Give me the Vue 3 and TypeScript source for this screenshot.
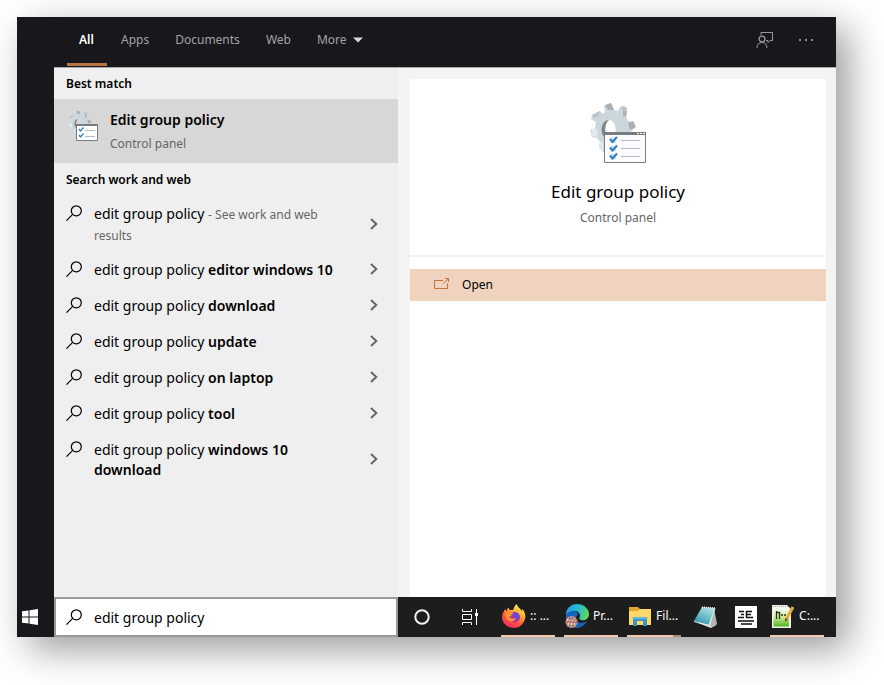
<script setup lang="ts">
import { ref } from 'vue'

interface Suggestion {
  typed: string
  completion?: string
  note?: string
}

const tabs: string[] = ['All', 'Apps', 'Documents', 'Web']
const activeTab = ref<string>('All')
const query = ref<string>('edit group policy')

const suggestions: Suggestion[] = [
  { typed: 'edit group policy', note: '- See work and web results' },
  { typed: 'edit group policy', completion: 'editor windows 10' },
  { typed: 'edit group policy', completion: 'download' },
  { typed: 'edit group policy', completion: 'update' },
  { typed: 'edit group policy', completion: 'on laptop' },
  { typed: 'edit group policy', completion: 'tool' },
  { typed: 'edit group policy', completion: 'windows 10 download' },
]
</script>

<template>
  <div class="page">
    <svg class="defs" width="0" height="0" aria-hidden="true">
      <symbol id="gear" viewBox="0 0 58 62" overflow="visible">
        <path fill="#ccd6dd" fill-rule="evenodd" d="M3 13 11 9 14 12 16 10 15 4 22 1 25 8 29 9 31 5 38 9 37 15 39 19 46 21 46 26 42 29 41 33V50H14L10 44 11 40 8 36 3 35 1 28 6 26 7 20 2 17ZM20 18C10 18 10 37 20 37 29 37 29 18 20 18Z" />
        <path fill="#7f868c" d="M20 18C10 18 10 37 20 37 15 33 15 22 20 18Z" />
        <path fill="#aab0b5" d="M16 3 22 1 25 8 19 8ZM39 21 44 19 47 25 41 28ZM34 8 38 9 37 15 34 14Z" />
        <path fill="#bcc3c8" d="M3 13 11 9 10 13 5 16ZM31 5 35 4 39 7 35 9Z" />
        <path fill="#e2eaef" d="M2 28 7 26 9 30 8 35 3 34ZM10 41 14 39 14 49Z" />
      </symbol>
      <symbol id="gear-list" viewBox="0 0 58 62">
        <use href="#gear" width="58" height="62" />
        <path fill="#fbfcfd" stroke="#777c82" d="M15.500 31.500H56.500V60.500H15.500Z" />
        <path fill="#777c82" d="M15 30H57V33H15Z" />
        <path stroke="#fff" d="M48 31.500H50M51 31.500H53M54 31.500H56" />
        <path fill="#cfe3f3" d="M21 35.500H27V41H21ZM21 44H27V49.500H21ZM21 52H27V57.500H21Z" />
        <path fill="none" stroke="#327fba" stroke-width="2" d="M21 37 23.500 40 28 35M21 45.500 23.500 48.500 28 43.500M21 53.500 23.500 56.500 28 51.500" />
        <path stroke="#b7bcc0" d="M32 38.500H51M32 46.500H51M32 54.500H51" />
      </symbol>
      <symbol id="gear-list-small" viewBox="0 0 32 32">
        <use href="#gear" x="2" width="29" height="31" />
        <path fill="#fff" stroke="#777c82" d="M10.500 15.500H31.500V30.500H10.500Z" />
        <path stroke="#777c82" stroke-width="2" d="M10 15H32" />
        <path fill="none" stroke="#3c82b9" stroke-width="1.400" d="M13 19 14.500 21 17.500 17.500M13 25 14.500 27 17.500 23.500" />
        <path stroke="#b7bcc0" d="M19 20.500H29M19 26.500H29" />
      </symbol>
      <symbol id="magnifier" viewBox="0 0 16 16">
        <circle cx="10.300" cy="5.800" r="5" fill="none" stroke="currentColor" stroke-width="1.200" />
        <path stroke="currentColor" stroke-width="1.200" d="M6.700 9.300.4 15.600" />
      </symbol>
    </svg>

    <div class="desktop">
      <header class="top">
        <nav class="tabs" aria-label="Search scope">
          <button
            v-for="tab in tabs"
            :key="tab"
            type="button"
            class="tab"
            :class="{ active: tab === activeTab }"
            @click="activeTab = tab"
          >{{ tab }}</button>
          <button type="button" class="tab">
            More
            <svg width="10" height="6" viewBox="0 0 10 6"><path fill="#d8d8d8" d="M0 .5H10L5 5.500Z" /></svg>
          </button>
        </nav>
        <div class="tools">
          <button type="button" class="tool" aria-label="Feedback">
            <svg width="18" height="18" viewBox="0 0 18 18" fill="none" stroke="#999a9c">
              <path d="M5 4V1.500H16.500V9.500H14L12 11.500V9.500H10" />
              <circle cx="6" cy="8" r="2.900" stroke-width="1.300" />
              <path d="M1 17C1 13.500 3 11.500 6 11.500S11 13.500 11 17" />
            </svg>
          </button>
          <button type="button" class="tool" aria-label="Options">
            <svg width="16" height="4" viewBox="0 0 16 4" fill="#8a8a8c"><path d="M1 1H3V3H1ZM7 1H9V3H7ZM13 1H15V3H13Z" /></svg>
          </button>
        </div>
      </header>

      <section class="results">
        <h2 class="group">Best match</h2>
        <button type="button" class="best">
          <svg width="32" height="32"><use href="#gear-list-small" /></svg>
          <span class="best-text">
            <span class="best-name">Edit group policy</span>
            <span class="best-kind">Control panel</span>
          </span>
        </button>
        <h2 class="group">Search work and web</h2>
        <ul class="list">
          <li v-for="(item, i) in suggestions" :key="i">
            <button type="button" class="row" :class="{ noted: item.note }">
              <svg class="lens" width="16" height="16"><use href="#magnifier" /></svg>
              <span class="label">
                <span>{{ item.typed }}</span>{{ ' ' }}<b v-if="item.completion">{{ item.completion }}</b>
                <small v-if="item.note">{{ item.note }}</small>
              </span>
              <svg class="chevron" width="8" height="12" viewBox="0 0 8 12"><path fill="none" stroke="#666" stroke-width="2" d="M1 1 6.300 6 1 11" /></svg>
            </button>
          </li>
        </ul>
      </section>

      <section class="detail">
        <div class="card">
          <div class="hero">
            <svg width="58" height="62"><use href="#gear-list" /></svg>
            <h1>Edit group policy</h1>
            <p>Control panel</p>
          </div>
          <button type="button" class="open">
            <svg width="16" height="14" viewBox="0 0 16 14" fill="none" stroke="#c8743c">
              <path d="M9 2.500H.5V10.500H13.500V5.500M9.500 5.500 14.500.5M11 .5H14.500V4" />
            </svg>
            Open
          </button>
        </div>
      </section>

      <button type="button" class="start" aria-label="Start">
        <svg width="16" height="16" viewBox="0 0 16 16" fill="#fff"><path d="M0 2.300 6.500 1.400V7.500H0ZM7.500 1.200 16 0V7.500H7.500ZM0 8.500H6.500V14.600L0 13.700ZM7.500 8.500H16V16L7.500 14.800Z" /></svg>
      </button>
      <label class="search">
        <svg width="16" height="16"><use href="#magnifier" /></svg>
        <input v-model="query" type="text" aria-label="Search" />
      </label>

      <footer class="taskbar">
        <button type="button" class="system" aria-label="Cortana">
          <svg width="16" height="16" viewBox="0 0 16 16"><circle cx="8" cy="8" r="6.700" fill="none" stroke="#f2f2f2" stroke-width="2" /></svg>
        </button>
        <button type="button" class="system" aria-label="Task view">
          <svg width="18" height="16" viewBox="0 0 18 16" fill="none" stroke="#fff">
            <path d="M1.500 0V2.500H10.500V0M1.500 5.500H10.500V10.500H1.500ZM1.500 16V13.500H10.500V16M15.500 0V16" />
            <path fill="#fff" stroke="none" d="M14 4H17V7H14Z" />
          </svg>
        </button>
        <div class="apps">
          <button type="button" class="app running">
            <svg width="24" height="24" viewBox="0 0 24 24">
              <defs>
                <linearGradient id="fox" x1=".8" y1="0" x2=".25" y2="1">
                  <stop offset="0" stop-color="#fff15a" /><stop offset=".35" stop-color="#ffb02d" /><stop offset=".65" stop-color="#ff5338" /><stop offset="1" stop-color="#e92867" />
                </linearGradient>
              </defs>
              <path fill="url(#fox)" d="M3 5 4.500 7 6 3.500 8 6 11 6C12 3 13 1 15 0 15 3 18 4 20 7L20.500 5C23 8 24 12 23 15 21 21 17 24 12 24 5 24 0 19 0 13 0 9 2 8 3 5Z" />
              <path fill="#b42eac" d="M8 9C12 6 18 9 18 13 18 17 14 19 11 18 8 17 7 15 7 13L10 12 11 10Z" />
              <path fill="#6948d5" d="M12 8C16 8 18 11 17 14 16 17 12 17 11 15 13 15 14 13 13 12 12 11 11 12 9 11Z" />
              <path fill="#ff9430" d="M3 9 8 7 12 9C10 10 9 10 8 12L7 13C9 15 11 15 14 14 12 19 6 18 4 14Z" />
            </svg>
            <span>:: ...</span>
          </button>
          <button type="button" class="app running">
            <svg width="24" height="24" viewBox="0 0 24 24">
              <defs>
                <linearGradient id="edge" x1="0" y1=".3" x2="1" y2=".5">
                  <stop offset="0" stop-color="#259de0" /><stop offset=".55" stop-color="#26bdd0" /><stop offset="1" stop-color="#66d94f" />
                </linearGradient>
              </defs>
              <path fill="#1565bd" d="M1 11C4 5 13 6 13 11 11 12 10 15 12 17 15 20 19 19 22 17 20 21 16 24 12 24 5 24 0 18 1 11Z" />
              <path fill="url(#edge)" d="M1 11C1 4 6 0 12 0 19 0 24 5 24 10 24 15 20 17 16 16 13 15 15 14 15 11 14 6 5 5 1 11Z" />
              <circle cx="6.500" cy="18" r="6" fill="#c99186" />
              <path stroke="#f0cdb6" stroke-width="2" stroke-dasharray="1 2" d="M2 16H11M3 20H11" />
              <path stroke="#b54263" stroke-width="1.500" stroke-dasharray="1 2" d="M2 18H12M4 14H10M4 22H10" />
              <path fill="#6aa25e" d="M3 17H5V18H3ZM8 15H10V16H8ZM7 21H9V22H7Z" />
              <path fill="#5f7fc0" d="M5 14H6V16H5ZM9 18H11V19H9ZM4 20H5V22H4Z" />
            </svg>
            <span>Pr...</span>
          </button>
          <button type="button" class="app running stacked">
            <svg width="24" height="24" viewBox="0 0 24 24">
              <path fill="#e3a52c" d="M1 3H10L12 5H22V9H1Z" />
              <path fill="#ffd967" d="M1 7H10L12 5H23V21H1Z" />
              <path fill="#3f93c5" d="M5 13H19V22H15V17H9V22H5Z" />
              <path fill="#62b5df" d="M5 13H19V15H5Z" />
            </svg>
            <span>Fil...</span>
          </button>
          <button type="button" class="app pinned" aria-label="Notepad">
            <svg width="24" height="24" viewBox="0 0 24 24">
              <defs>
                <linearGradient id="pad" x1=".7" y1="0" x2=".2" y2="1">
                  <stop offset="0" stop-color="#b5dde3" /><stop offset=".5" stop-color="#6dbccb" /><stop offset="1" stop-color="#2f8ea6" />
                </linearGradient>
              </defs>
              <path fill="#e3e6e4" d="M4 18 17 6 22 20 17 23Z" />
              <path fill="#b3b5b0" d="M20 3 23 19 21 21 16 22Z" />
              <path fill="url(#pad)" d="M8 2 21 3 15 20 0 16Z" />
              <path fill="none" stroke="#dfeff0" d="M0 16.500 15 20.500 21 3.500" />
              <path stroke="#f2f8f8" stroke-width="1.300" stroke-dasharray="1 1" d="M8 2 21 3" />
            </svg>
          </button>
          <button type="button" class="app pinned" aria-label="Reader">
            <svg width="22" height="22" viewBox="0 0 22 22">
              <path fill="#fff" d="M0 0H22V22H0Z" />
              <path fill="none" stroke="#111" stroke-width="1.500" d="M4 5.500H9M6 8.500H9M3 11.500H9M11.500 12V5.500H17M11.500 8.500H16M11.500 11.500H18M3 15H19M6 18H17" />
            </svg>
          </button>
          <button type="button" class="app running">
            <svg width="24" height="24" viewBox="0 0 24 24">
              <defs>
                <linearGradient id="sheet" x1="0" y1="0" x2="0" y2="1">
                  <stop offset=".1" stop-color="#f6f9ef" /><stop offset=".5" stop-color="#d2ed9a" /><stop offset="1" stop-color="#4fb51c" />
                </linearGradient>
              </defs>
              <path fill="#eef2ea" d="M1 1H16L20 5V24H1Z" />
              <path fill="url(#sheet)" d="M2.500 3H18V22.500H2.500Z" />
              <path stroke="#aab0a2" stroke-dasharray="1 1" d="M2 2.500H17" />
              <path fill="none" stroke="#263319" stroke-width="1.300" d="M5.500 7V15M8.500 15V8.500H6M10 11H12M13 11H15" />
              <path stroke="#e4a936" stroke-width="3" d="M22 3 15.500 15" />
              <path fill="#6b4525" d="M14.300 14 16.800 15.500 14 18Z" />
            </svg>
            <span>C:...</span>
          </button>
        </div>
      </footer>
    </div>
  </div>
</template>

<style>
body {
  margin: 0;
  background: #fff;
}
</style>

<style scoped>
.page {
  box-sizing: border-box;
  display: flex;
  min-height: 100vh;
  padding: 17px 48px 48px 17px;
  overflow: hidden;
  font-family: "Noto Sans", "Open Sans", sans-serif;
  font-size: 14px;
  line-height: 20px;
  color: #000;
}
.defs {
  position: absolute;
}
.desktop {
  flex: 1;
  display: grid;
  grid-template-columns: 37px minmax(0, 11fr) minmax(0, 14fr);
  grid-template-rows: 50px 1fr 40px;
  background: #18171c;
  box-shadow: 12px 12px 36px rgba(0, 0, 0, 0.4);
}
button {
  margin: 0;
  padding: 0;
  border: 0;
  background: none;
  font: inherit;
  color: inherit;
  text-align: left;
}
svg {
  display: block;
  flex: none;
}
h1, h2, p, ul {
  margin: 0;
  padding: 0;
  font-weight: 400;
}
.top {
  grid-column: 2 / 4;
  display: flex;
  justify-content: space-between;
  padding: 0 22px 0 13px;
}
.tabs {
  display: flex;
  gap: 2px;
  padding-bottom: 1px;
}
.tab {
  display: flex;
  align-items: center;
  gap: 6px;
  box-sizing: border-box;
  min-width: 40px;
  padding: 0 12px;
  border-bottom: 3px solid transparent;
  font-size: 12px;
  color: #a3a3a5;
}
.tab.active {
  border-color: #b87445;
  font-weight: 600;
  color: #fff;
}
.tools {
  display: flex;
  align-items: center;
  gap: 24px;
  padding-bottom: 4px;
}
.results {
  grid-column: 2;
  background: #efefef;
  box-shadow: inset 0 1px #a9a9ac;
}
.group {
  padding: 7px 12px 5px;
  font-size: 12px;
  font-weight: 600;
}
.best {
  display: flex;
  gap: 12px;
  box-sizing: border-box;
  width: 100%;
  height: 64px;
  padding: 11px 12px;
  background: #d7d7d7;
}
.best-text {
  display: flex;
  flex-direction: column;
  gap: 4px;
}
.best-name {
  font-weight: 600;
}
.best-kind {
  font-size: 12px;
  color: #666;
}
.list {
  list-style: none;
}
.row {
  display: flex;
  align-items: center;
  gap: 12px;
  width: 100%;
  padding: 8px 20px 8px 12px;
}
.row.noted {
  padding-top: 9px;
  padding-bottom: 6px;
}
.lens {
  align-self: flex-start;
  margin-top: 1px;
}
.chevron {
  margin-bottom: 2px;
}
.label {
  flex: 1;
  padding-right: 24px;
}
.label b {
  font-weight: 600;
}
.label small {
  font-size: 12px;
  color: #666;
}
.detail {
  grid-column: 3;
  display: flex;
  padding: 12px 10px 0 12px;
  background: #f4f4f4;
  box-shadow: inset 0 1px #a9a9ac;
}
.card {
  flex: 1;
  background: #fff;
}
.hero {
  display: flex;
  flex-direction: column;
  align-items: center;
  padding: 23px 0 27px;
  border-bottom: 2px solid #f2f2f2;
}
.hero h1 {
  margin-top: 16px;
  font-size: 17px;
  line-height: 24px;
}
.hero p {
  margin-top: 4px;
  font-size: 12px;
  color: #666;
}
.open {
  display: flex;
  align-items: center;
  gap: 12px;
  width: 100%;
  height: 32px;
  margin-top: 12px;
  padding: 0 24px;
  background: #f0d3be;
  font-size: 12px;
}
.start {
  display: flex;
  align-items: center;
  padding-left: 5px;
}
.search {
  display: flex;
  align-items: center;
  gap: 12px;
  padding: 0 10px;
  border: 2px solid #999;
  background: #fff;
}
.search input {
  flex: 1;
  min-width: 0;
  padding: 2px 0 0;
  border: 0;
  outline: 0;
  background: none;
  font: inherit;
  color: inherit;
}
.taskbar {
  display: flex;
  background: #1d1d1d;
}
.system {
  display: flex;
  align-items: center;
  justify-content: center;
  width: 48px;
}
.apps {
  display: flex;
  gap: 9px;
  padding-left: 7px;
}
.app {
  display: flex;
  align-items: center;
  gap: 4px;
  font-size: 12px;
  color: #fff;
  white-space: nowrap;
}
.running {
  box-sizing: border-box;
  width: 54px;
  padding-left: 1px;
  border-bottom: 2px solid #f3c9ab;
}
.stacked {
  border-image: linear-gradient(to right, #f3c9ab 83%, #a58c7b 83%) 2;
}
.pinned {
  justify-content: center;
  width: 31px;
}
</style>
